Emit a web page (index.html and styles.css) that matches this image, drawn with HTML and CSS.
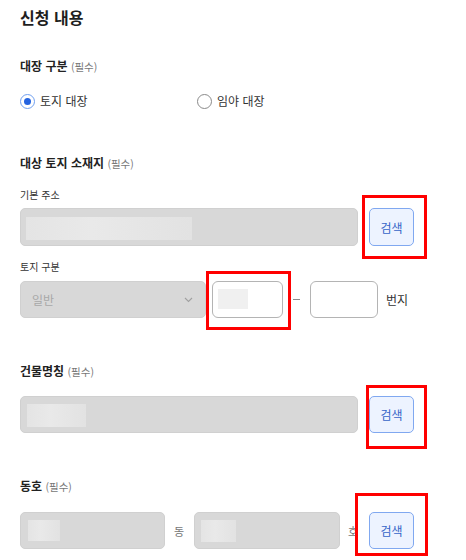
FILE: index.html
```html
<!DOCTYPE html>
<html lang="ko">
<head>
<meta charset="utf-8">
<link rel="stylesheet" href="styles.css">
</head>
<body>
<div class="page">
  <h1 class="title">신청 내용</h1>

  <h2 class="heading h-type">대장 구분 <span class="req">(필수)</span></h2>
  <div class="radios">
    <label class="radio"><span class="dot checked"></span>토지 대장</label>
    <label class="radio"><span class="dot"></span>임야 대장</label>
  </div>

  <h2 class="heading h-loc">대상 토지 소재지 <span class="req">(필수)</span></h2>
  <div class="label l-addr">기본 주소</div>
  <div class="row r-addr">
    <div class="field f-addr"><span class="mask m-addr"></span></div>
    <div class="btn-wrap"><button class="btn">검색</button><span class="mark mk1"></span></div>
  </div>

  <div class="label l-kind">토지 구분</div>
  <div class="row r-kind">
    <div class="select"><span class="sel-text">일반</span>
      <svg class="chev" width="9" height="6" viewBox="0 0 9 6"><path d="M1 1l3.5 3.5L8 1" fill="none" stroke="#a0a0a0" stroke-width="1.1"/></svg>
    </div>
    <div class="btn-wrap"><div class="box b-main"><span class="mask m-small"></span></div><span class="mark mk2"></span></div>
    <span class="dash"><span class="dash-line"></span></span>
    <div class="box b-sub"></div>
    <span class="unit">번지</span>
  </div>

  <h2 class="heading h-bld">건물명칭 <span class="req">(필수)</span></h2>
  <div class="row r-bld">
    <div class="field f-bld"><span class="mask m-bld"></span></div>
    <div class="btn-wrap"><button class="btn">검색</button><span class="mark mk3"></span></div>
  </div>

  <h2 class="heading h-dong">동호 <span class="req">(필수)</span></h2>
  <div class="row r-dong">
    <div class="field f-dong"><span class="mask m-dong"></span></div>
    <span class="suffix s-dong">동</span>
    <div class="field f-ho"><span class="mask m-ho"></span></div>
    <span class="suffix s-ho">호</span>
    <div class="btn-wrap"><button class="btn">검색</button><span class="mark mk4"></span></div>
  </div>
</div>
</body>
</html>
```

FILE: styles.css
```css
* { box-sizing: border-box; }
html, body { margin: 0; padding: 0; background: #fff; }
body {
  font-family: "Noto Sans CJK KR", "Noto Sans", sans-serif;
  color: #222;
  width: 466px;
  height: 560px;
  overflow: hidden;
}
.page { padding: 0 0 0 20px; }

.title {
  margin: 5px 0 0;
  font-size: 16px;
  line-height: 24px;
  height: 24px;
  font-weight: 700;
  color: #1e1e1e;
}
.heading {
  margin: 0;
  font-size: 12px;
  line-height: 18px;
  height: 18px;
  font-weight: 700;
  color: #222;
}
.req { font-size: 10.5px; line-height: 1; font-weight: 400; color: #777; }
.h-type { margin-top: 28px; }
.h-loc { margin-top: 44px; }
.h-bld { margin-top: 44px; }
.h-dong { margin-top: 44px; }

.radios { display: flex; margin-top: 17px; height: 18px; align-items: center; }
.radio {
  display: flex; align-items: center; gap: 5px;
  font-size: 12px; color: #333; line-height: 18px;
}
.radio:first-child { width: 177px; }
.dot {
  width: 15px; height: 15px; border-radius: 50%;
  border: 1px solid #8a8a8a; background: #fff;
  display: inline-block; position: relative;
}
.dot.checked { border: 1.5px solid #6f9ff0; }
.dot.checked::after {
  content: ""; position: absolute; left: 50%; top: 50%;
  width: 7px; height: 7px; margin: -3.5px 0 0 -3.5px;
  border-radius: 50%; background: #2463e0;
}

.label { font-size: 10px; line-height: 14px; height: 14px; color: #333; }
.l-addr { margin-top: 16px; }
.l-kind { margin-top: 14px; }

.row { display: flex; align-items: center; }
.r-addr { margin-top: 6px; height: 38px; }
.r-kind { margin-top: 7px; height: 37px; }
.r-bld { margin-top: 16px; height: 37px; }
.r-dong { margin-top: 17px; height: 37px; }

.field {
  height: 100%;
  background: #d8d8d8;
  border: 1px solid #d0d0d0;
  border-radius: 5px;
  position: relative;
}
.f-addr, .f-bld { width: 338px; margin-right: 11px; }
.f-dong { width: 145px; }
.f-ho { width: 146px; }

.mask {
  display: block; position: absolute;
  background: linear-gradient(90deg, #e4e4e4, #e9e9e9 40%, #e2e2e2);
  filter: blur(0.6px);
}
.m-addr { left: 5px; top: 8px; width: 166px; height: 23px; }
.m-bld { left: 6px; top: 7px; width: 59px; height: 23px; }
.m-dong { left: 7px; top: 7px; width: 32px; height: 21px; }
.m-ho { left: 6px; top: 7px; width: 35px; height: 22px; }
.m-small { left: 5px; top: 7px; width: 30px; height: 20px; background: #f0f0f0; }

.suffix { font-size: 11px; color: #777; }
.s-dong { width: 29px; padding-left: 9px; }
.s-ho { width: 29px; padding-left: 8px; }

.btn-wrap { position: relative; height: 100%; }
.btn {
  width: 45px; height: 100%;
  background: #edf3ff;
  border: 1px solid #80a8f0;
  border-radius: 5px;
  color: #3565c8;
  font-family: inherit;
  font-size: 12px;
  padding: 0;
}
.mark {
  position: absolute;
  border: 3px solid #ff0000;
  pointer-events: none;
}
.mk1 { left: -7px; right: -13px; top: -13px; bottom: -13px; }
.mk2 { left: -6px; right: -8px; top: -10px; bottom: -12px; }
.mk3 { left: -3px; right: -13px; top: -11px; bottom: -16px; }
.mk4 { left: -14px; right: -14px; top: -19px; bottom: -7px; }

.select {
  width: 186px; height: 100%;
  background: #d8d8d8;
  border: 1px solid #d0d0d0;
  border-radius: 5px;
  display: flex; align-items: center; justify-content: space-between;
  padding: 0 12px 0 11px;
  margin-right: 6px;
}
.sel-text { font-size: 12px; color: #a8a8a8; }
.chev { display: block; }

.box {
  height: 100%;
  background: #fff;
  border: 1px solid #b4b4b4;
  border-radius: 6px;
  position: relative;
}
.b-main { width: 71px; }
.b-sub { width: 68px; }
.dash { width: 27px; display: flex; justify-content: center; }
.dash-line { display: block; width: 7px; height: 1px; background: #8c8c8c; }
.unit { margin-left: 8px; font-size: 12px; color: #333; }
```
